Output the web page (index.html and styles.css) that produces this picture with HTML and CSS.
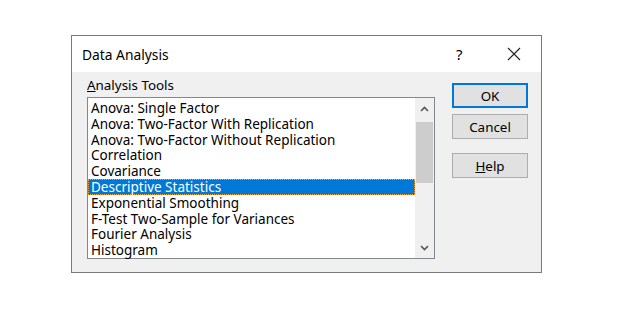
FILE: index.html
```html
<!DOCTYPE html>
<html lang="en">
<head>
    <meta charset="UTF-8">
    <title>Data Analysis</title>
    <link rel="stylesheet" href="styles.css">
</head>
<body>
    <div class="dialog">
        <div class="titlebar">
            <span class="title">Data Analysis</span>
            <span class="help-q">?</span>
            <span class="close">
                <svg width="14" height="14" viewBox="0 0 14 14"><path d="M1 1L13 13M13 1L1 13" stroke="#222" stroke-width="1.2" fill="none"/></svg>
            </span>
        </div>

        <div class="content">
            <div class="tools">
                <div class="label"><u>A</u>nalysis Tools</div>
                <div class="listbox">
                    <ul class="items">
                        <li>Anova: Single Factor</li>
                        <li>Anova: Two-Factor With Replication</li>
                        <li>Anova: Two-Factor Without Replication</li>
                        <li>Correlation</li>
                        <li>Covariance</li>
                        <li class="selected">Descriptive Statistics</li>
                        <li>Exponential Smoothing</li>
                        <li>F-Test Two-Sample for Variances</li>
                        <li>Fourier Analysis</li>
                        <li>Histogram</li>
                    </ul>
                    <div class="scrollbar">
                        <div class="arrow up">
                            <svg width="9" height="6" viewBox="0 0 9 6"><path d="M1 5L4.5 1.5L8 5" stroke="#555" stroke-width="1.6" fill="none"/></svg>
                        </div>
                        <div class="thumb"></div>
                        <div class="spacer"></div>
                        <div class="arrow">
                            <svg width="9" height="6" viewBox="0 0 9 6"><path d="M1 1L4.5 4.5L8 1" stroke="#555" stroke-width="1.6" fill="none"/></svg>
                        </div>
                    </div>
                </div>
            </div>

            <div class="buttons">
                <button class="btn default">OK</button>
                <button class="btn">Cancel</button>
                <button class="btn help"><u>H</u>elp</button>
            </div>
        </div>
    </div>
</body>
</html>
```

FILE: styles.css
```css
body {
    margin: 0;
    padding: 35px 0 0 71px;
    background-color: #ffffff;
    font-family: "Noto Sans", "Open Sans", sans-serif;
    color: #000;
}

.dialog {
    width: 469px;
    height: 236px;
    border: 1px solid #7a7a7a;
    background-color: #f0f0f0;
    display: flex;
    flex-direction: column;
}

.titlebar {
    height: 36px;
    background-color: #fff;
    display: flex;
    align-items: center;
    padding-left: 10px;
}

.title {
    font-size: 13.8px;
    flex: 1;
}

.help-q {
    font-size: 15px;
    width: 20px;
    margin-right: 31px;
}

.close {
    width: 14px;
    height: 14px;
    display: flex;
    margin-right: 20px;
}

.content {
    display: flex;
    padding: 5px 0 0 15px;
    gap: 17px;
}

.label {
    font-size: 13.4px;
    line-height: 16px;
    margin-bottom: 4px;
}

.listbox {
    width: 346px;
    height: 160px;
    border: 1px solid #828790;
    background-color: #fff;
    display: flex;
}

.items {
    list-style: none;
    margin: 0;
    padding: 2px 0 0 0;
    flex: 1;
}

.items li {
    height: 15.8px;
    line-height: 15px;
    font-size: 13.5px;
    padding: 1px 0 0 3px;
    white-space: nowrap;
    box-sizing: border-box;
}

.items li.selected {
    background-color: #0078d7;
    color: #fff;
    border: 1px dotted #f0a040;
    line-height: 14px;
    padding: 0 0 0 2px;
}

.scrollbar {
    width: 19px;
    background-color: #f0f0f0;
    display: flex;
    flex-direction: column;
    align-items: center;
}

.arrow {
    height: 21px;
    display: flex;
    align-items: center;
    justify-content: center;
}

.arrow.up {
    height: 22px;
}

.thumb {
    width: 17px;
    height: 61px;
    margin-top: 2px;
    background-color: #cdcdcd;
}

.spacer {
    flex: 1;
}

.buttons {
    display: flex;
    flex-direction: column;
    margin-top: 6px;
}

.btn {
    width: 76px;
    height: 25px;
    margin-bottom: 6px;
    background-color: #e1e1e1;
    border: 1px solid #adadad;
    font-family: "Noto Sans", "Open Sans", sans-serif;
    font-size: 13.4px;
    padding: 0;
    color: #000;
}

.btn.default {
    border: 2px solid #0078d7;
}

.btn.help {
    margin-top: 8px;
}
```
